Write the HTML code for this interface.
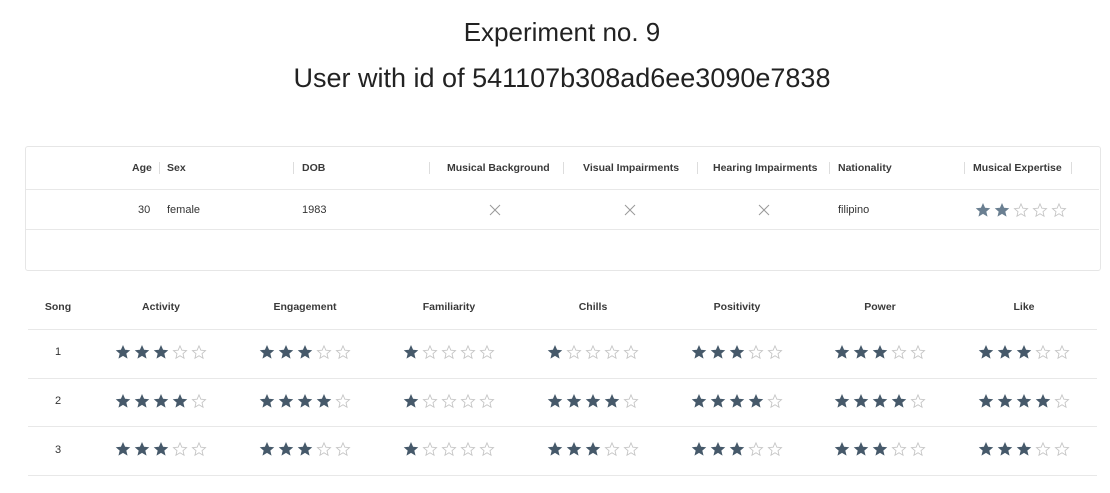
<!DOCTYPE html>
<html><head><meta charset="utf-8"><style>
body{margin:0;width:1110px;height:493px;background:#fff;font-family:"Liberation Sans",sans-serif;position:relative;overflow:hidden;color:#333}
.a{position:absolute;white-space:nowrap}
.t{font-size:11px;color:#333;transform:translateX(-50%)}
.b{font-weight:bold;font-size:10.5px;color:#3a3a3a}
.line{position:absolute;height:1px;background:#e8e8e8}
.sep{position:absolute;width:1px;height:12px;background:#ddd}
.st{position:absolute;display:flex;gap:3px}
.st svg{width:16px;height:16px}
.x{position:absolute;width:12px;height:12px}
</style></head><body>
<div class="a" style="left:0;width:1124px;text-align:center;top:17px;font-size:26px;color:#222">Experiment no. 9</div>
<div class="a" style="left:0;width:1124px;text-align:center;top:63px;font-size:27px;color:#222">User with id of 541107b308ad6ee3090e7838</div>

<div style="position:absolute;left:25px;top:146px;width:1074px;height:123px;border:1px solid #e6e6e6;border-radius:3px"></div>
<div class="line" style="left:26px;top:189px;width:1073px"></div>
<div class="line" style="left:26px;top:229px;width:1073px"></div>

<div class="a b" style="left:132px;top:162px">Age</div>
<div class="sep" style="left:159px;top:162px"></div>
<div class="a b" style="left:167px;top:162px">Sex</div>
<div class="sep" style="left:293px;top:162px"></div>
<div class="a b" style="left:302px;top:162px">DOB</div>
<div class="sep" style="left:429px;top:162px"></div>
<div class="a b" style="left:447px;top:162px">Musical Background</div>
<div class="sep" style="left:563px;top:162px"></div>
<div class="a b" style="left:583px;top:162px">Visual Impairments</div>
<div class="sep" style="left:697px;top:162px"></div>
<div class="a b" style="left:713px;top:162px">Hearing Impairments</div>
<div class="sep" style="left:829px;top:162px"></div>
<div class="a b" style="left:838px;top:162px">Nationality</div>
<div class="sep" style="left:964px;top:162px"></div>
<div class="a b" style="left:973px;top:162px">Musical Expertise</div>
<div class="sep" style="left:1071px;top:162px"></div>

<div class="a" style="left:138px;top:204px;font-size:11px">30</div>
<div class="a" style="left:167px;top:204px;font-size:11px">female</div>
<div class="a" style="left:302px;top:204px;font-size:11px">1983</div>
<svg class="x" style="left:489px;top:204px" viewBox="0 0 12 12"><path d="M1 1L11 11M11 1L1 11" stroke="#999" stroke-width="1"/></svg>
<svg class="x" style="left:624px;top:204px" viewBox="0 0 12 12"><path d="M1 1L11 11M11 1L1 11" stroke="#999" stroke-width="1"/></svg>
<svg class="x" style="left:758px;top:204px" viewBox="0 0 12 12"><path d="M1 1L11 11M11 1L1 11" stroke="#999" stroke-width="1"/></svg>
<div class="a" style="left:838px;top:204px;font-size:11px">filipino</div>
<div id="me" class="st" style="left:975px;top:202px"></div>

<div class="a b t" style="left:58px;top:301px">Song</div>
<div class="a b t" style="left:161px;top:301px">Activity</div>
<div class="a b t" style="left:305px;top:301px">Engagement</div>
<div class="a b t" style="left:449px;top:301px">Familiarity</div>
<div class="a b t" style="left:593px;top:301px">Chills</div>
<div class="a b t" style="left:737px;top:301px">Positivity</div>
<div class="a b t" style="left:880px;top:301px">Power</div>
<div class="a b t" style="left:1024px;top:301px">Like</div>
<div class="line" style="left:28px;top:329px;width:1069px"></div>
<div class="line" style="left:28px;top:378px;width:1069px"></div>
<div class="line" style="left:28px;top:426px;width:1069px"></div>
<div class="line" style="left:28px;top:475px;width:1069px"></div>
<div class="a t" style="left:58px;top:346px">1</div>
<div class="a t" style="left:58px;top:395px">2</div>
<div class="a t" style="left:58px;top:444px">3</div>
<div id="stars"></div>
<script>
function stars(n,fill){var f='<svg viewBox="0 0 24 24"><path d="M12 1.5l3.1 7.2 7.8.6-5.9 5.1 1.8 7.6L12 17.9 5.2 22l1.8-7.6L1.1 9.3l7.8-.6z" fill="'+fill+'"/></svg>';var e='<svg viewBox="0 0 24 24"><path d="M12 2.8l2.8 6.5 7 .6-5.3 4.6 1.6 6.9L12 17.7l-6.1 3.7 1.6-6.9L2.2 9.9l7-.6z" fill="none" stroke="#c4c4c4" stroke-width="1.3"/></svg>';var s='';for(var i=0;i<5;i++)s+=i<n?f:e;return s;}
document.getElementById('me').innerHTML=stars(2,'#6a7f91');
var cx=[161,305,449,593,737,880,1024],ys=[344,393,441];
var d=[[3,3,1,1,3,3,3],[4,4,1,4,4,4,4],[3,3,1,3,3,3,3]];
var h='';for(var r=0;r<3;r++)for(var c=0;c<7;c++)h+='<div class="st" style="left:'+(cx[c]-46)+'px;top:'+ys[r]+'px">'+stars(d[r][c],'#46596a')+'</div>';
document.getElementById('stars').innerHTML=h;
</script>
</body></html>
